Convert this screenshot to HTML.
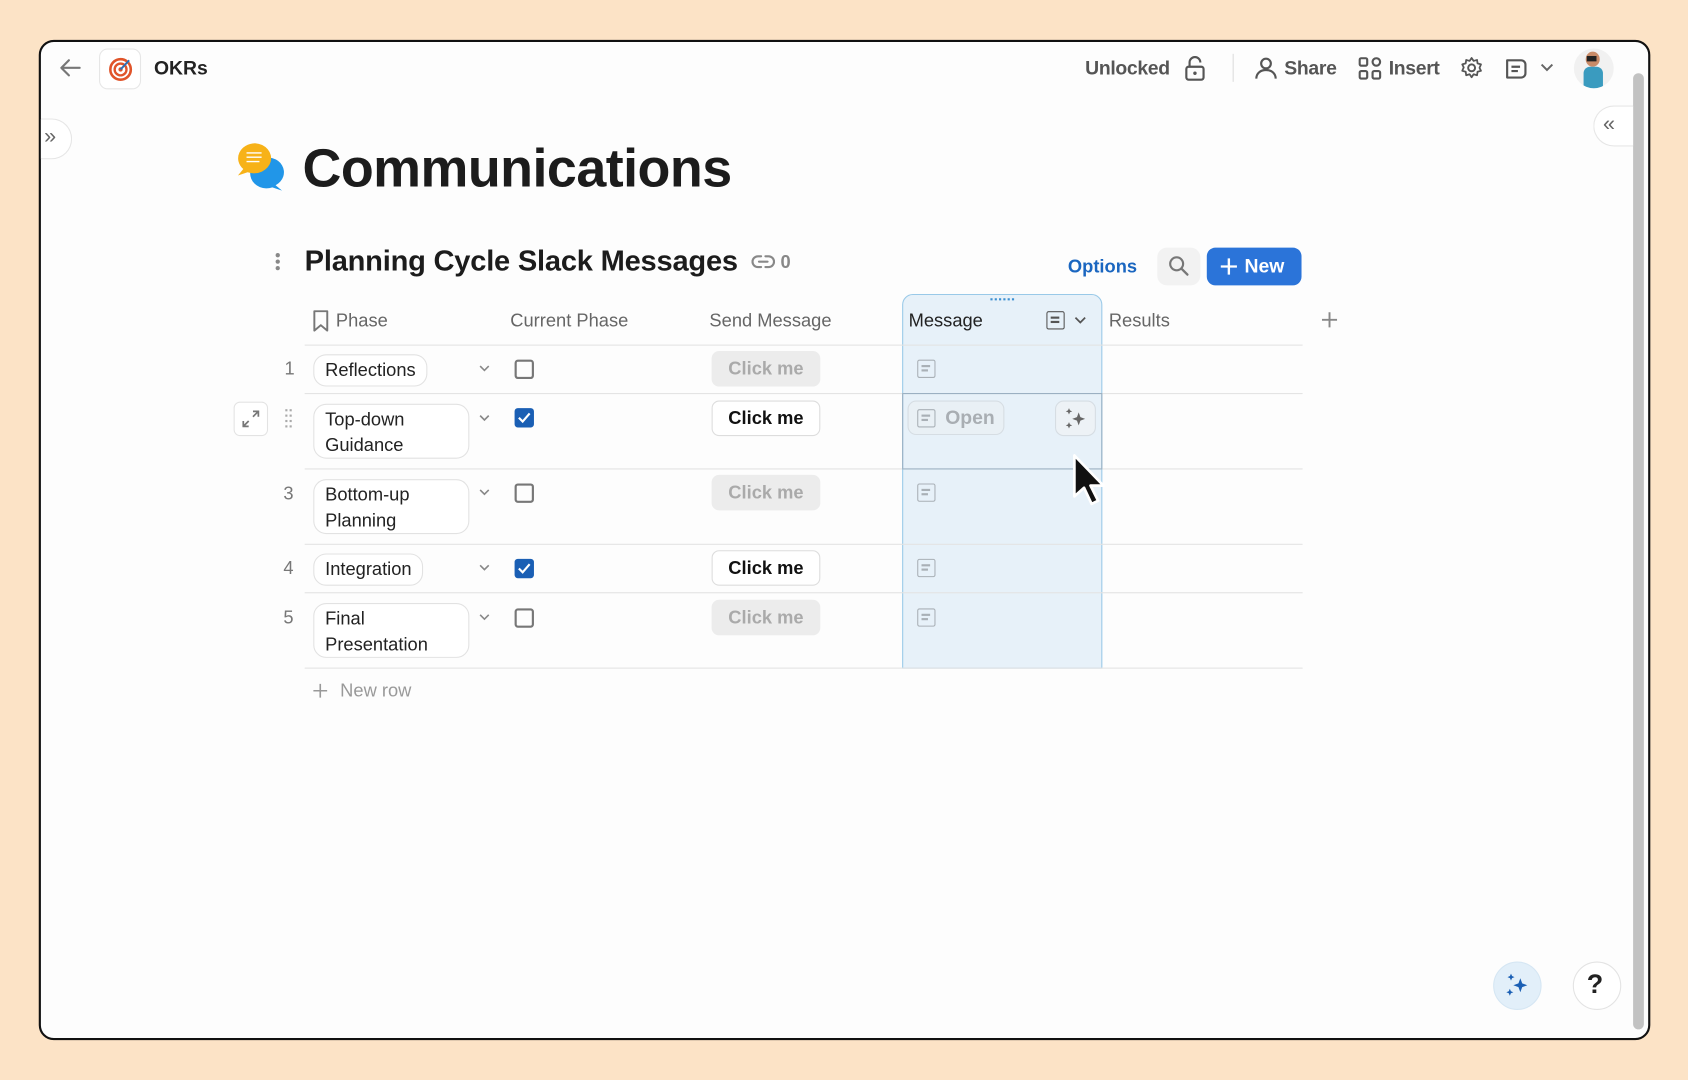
<!DOCTYPE html>
<html><head><meta charset="utf-8">
<style>
*{box-sizing:border-box;margin:0;padding:0}
html,body{width:1688px;height:1080px;overflow:hidden;background:#fce3c6;font-family:"Liberation Sans",sans-serif;color:#222}
#w{position:absolute;left:0;top:0;width:1568px;height:1003px;transform:scale(1.07653,1.07677);transform-origin:0 0}
.a{position:absolute}
#frame{left:36px;top:37px;width:1497px;height:929px;background:#fdfdfd;border:2.5px solid #111;border-radius:14px;overflow:hidden}
.t{position:absolute;white-space:nowrap}
.hd{font-size:17px;color:#666;top:288px}
.pill{position:absolute;border:1px solid #e2e2e2;border-radius:12px;background:#fff;font-size:17px;color:#222;padding:2px 10px;line-height:24px}
.num{position:absolute;font-size:17px;color:#777;width:20px;text-align:center}
.cb{position:absolute;width:18px;height:18px;border:2px solid #777;border-radius:3px;left:478px}
.cbon{background:#1a5fb4;border-color:#1a5fb4}
.btn{position:absolute;left:661px;width:101px;height:33px;border-radius:7px;font-size:17px;text-align:center;line-height:33px;font-weight:bold}
.bg{background:#ececec;color:#aaa}
.bw{background:#fff;border:1px solid #ddd;color:#111;line-height:31px}
.hl{position:absolute;left:283px;width:927px;height:1px;background:#e3e3e3}
.chev{position:absolute;left:445px;width:10px;height:7px}
.mi{position:absolute;left:852px;width:17px;height:17px;border:1.6px solid #a9b0b6;border-radius:2px}
.mi:before,.mi:after{content:"";position:absolute;left:3px;height:1.5px;background:#a9b0b6}
.mi:before{top:4px;width:8px}.mi:after{top:8px;width:6px}
</style></head><body><div id="w">
<div id="frame" class="a"></div>
<div class="a" style="left:1517px;top:68px;width:10px;height:888px;background:#c2c2c2;border-radius:5px"></div>

<svg class="a" style="left:54px;top:53px" width="22" height="20" viewBox="0 0 22 20"><path d="M20 10H3M10 3L3 10l7 7" fill="none" stroke="#777" stroke-width="2" stroke-linecap="round" stroke-linejoin="round"/></svg>
<div class="a" style="left:92px;top:45px;width:39px;height:38px;border:1px solid #e6e6e6;border-radius:8px;background:#fff"></div>
<svg class="a" style="left:100px;top:52px" width="24" height="24" viewBox="0 0 24 24"><circle cx="12" cy="12.5" r="9.5" fill="none" stroke="#e0542a" stroke-width="2.4"/><circle cx="12" cy="12.5" r="5.5" fill="none" stroke="#e0542a" stroke-width="2.2"/><circle cx="12" cy="12.5" r="2" fill="#e0542a"/><path d="M12 12.5L20 4" stroke="#2c6fb8" stroke-width="1.8"/></svg>
<div class="t" style="left:143px;top:53px;font-size:18px;font-weight:bold;color:#222">OKRs</div>

<div class="t" style="left:1008px;top:53px;font-size:18px;font-weight:bold;color:#555;letter-spacing:-0.3px">Unlocked</div>
<svg class="a" style="left:1100px;top:52px" width="20" height="24" viewBox="0 0 20 24"><rect x="2" y="10" width="16" height="12" rx="2" fill="none" stroke="#555" stroke-width="2"/><path d="M5 10V6a5 5 0 0 1 10 0" fill="none" stroke="#555" stroke-width="2"/><circle cx="10" cy="16" r="1.6" fill="#555"/></svg>
<div class="a" style="left:1145px;top:50px;width:1px;height:26px;background:#ddd"></div>
<svg class="a" style="left:1165px;top:52px" width="22" height="22" viewBox="0 0 22 22"><circle cx="11" cy="7" r="4.5" fill="none" stroke="#555" stroke-width="2"/><path d="M2 21c0-5 4-8 9-8s9 3 9 8" fill="none" stroke="#555" stroke-width="2"/></svg>
<div class="t" style="left:1193px;top:53px;font-size:18px;font-weight:bold;color:#555;letter-spacing:-0.3px">Share</div>
<svg class="a" style="left:1262px;top:53px" width="22" height="22" viewBox="0 0 22 22"><rect x="1" y="1" width="7" height="7" rx="1.5" fill="none" stroke="#555" stroke-width="2"/><rect x="1" y="13" width="7" height="7" rx="1.5" fill="none" stroke="#555" stroke-width="2"/><rect x="13" y="13" width="7" height="7" rx="1.5" fill="none" stroke="#555" stroke-width="2"/><circle cx="16.5" cy="4.5" r="3.5" fill="none" stroke="#555" stroke-width="2"/></svg>
<div class="t" style="left:1290px;top:53px;font-size:18px;font-weight:bold;color:#555;letter-spacing:-0.3px">Insert</div>
<svg class="a" style="left:1356px;top:52px" width="22" height="22" viewBox="0 0 24 24"><circle cx="12" cy="12" r="3.5" fill="none" stroke="#555" stroke-width="2"/><path d="M12 2l2 3 3.5-1 .5 3.5 3.5 1-1.5 3.5 1.5 3-3.5 1-.5 3.5-3.5-1-2 3-2-3-3.5 1-.5-3.5-3.5-1 1.5-3.5L2.5 8.5 6 7.5 6.5 4 10 5z" fill="none" stroke="#555" stroke-width="1.8" stroke-linejoin="round"/></svg>
<svg class="a" style="left:1396px;top:52px" width="24" height="24" viewBox="0 0 24 24"><path d="M4 4h13a4 4 0 0 1 4 4v8a4 4 0 0 1-4 4H4z" fill="none" stroke="#555" stroke-width="2" stroke-linejoin="round"/><path d="M8 10h8M8 14h6" stroke="#555" stroke-width="2"/></svg>
<svg class="a" style="left:1431px;top:59px" width="12" height="8" viewBox="0 0 12 8"><path d="M1 1l5 5 5-5" fill="none" stroke="#666" stroke-width="1.8"/></svg>
<div class="a" style="left:1462px;top:45px;width:37px;height:37px;border-radius:50%;background:#f1f1f1;overflow:hidden">
<div class="a" style="left:11px;top:3px;width:13px;height:14px;border-radius:50%;background:#c98b68"></div>
<div class="a" style="left:12px;top:7px;width:9px;height:5px;background:#222"></div>
<div class="a" style="left:9px;top:17px;width:18px;height:22px;border-radius:6px 6px 0 0;background:#3a9bbf"></div></div>

<div class="a" style="left:38px;top:110px;width:29px;height:38px;border:1px solid #e6e6e6;border-left:none;border-radius:0 19px 19px 0;background:#fff"></div>
<div class="t" style="left:41px;top:116px;font-size:20px;color:#666">»</div>
<div class="a" style="left:1480px;top:98px;width:37px;height:38px;border:1px solid #e6e6e6;border-right:none;border-radius:19px 0 0 19px;background:#fff"></div>
<div class="t" style="left:1489px;top:104px;font-size:20px;color:#666">«</div>

<svg class="a" style="left:220px;top:132px" width="46" height="46" viewBox="0 0 46 46"><path d="M22 16a13 12 0 1 1 14 24l6 5-9-3a13 12 0 0 1-11-26z" fill="#2196e8"/><path d="M17 1a16 14 0 1 1-7 27l-9 3 5-6A16 14 0 0 1 17 1z" fill="#f7b218"/><path d="M9 10h14M9 14h14M9 18h12" stroke="#fff" stroke-width="1.3"/></svg>
<div class="t" style="left:281px;top:127px;font-size:50px;font-weight:bold;color:#1c1c1c;letter-spacing:-0.5px">Communications</div>

<div class="a" style="left:256px;top:235px;width:4px;height:4px;border-radius:50%;background:#888;box-shadow:0 6px 0 #888,0 12px 0 #888"></div>
<div class="t" style="left:283px;top:227px;font-size:27px;font-weight:bold;color:#1c1c1c;letter-spacing:-0.2px">Planning Cycle Slack Messages</div>
<svg class="a" style="left:698px;top:235px" width="22" height="16" viewBox="0 0 22 16"><path d="M9 3H6a5 5 0 0 0 0 10h3M13 3h3a5 5 0 0 1 0 10h-3M7 8h8" fill="none" stroke="#888" stroke-width="2" stroke-linecap="round"/></svg>
<div class="t" style="left:725px;top:234px;font-size:17px;color:#888;font-weight:bold">0</div>

<div class="t" style="left:992px;top:238px;font-size:17px;font-weight:bold;color:#1a66c0">Options</div>
<div class="a" style="left:1075px;top:230px;width:40px;height:35px;border-radius:9px;background:#f2f2f2"></div>
<svg class="a" style="left:1085px;top:237px" width="20" height="20" viewBox="0 0 20 20"><circle cx="8" cy="8" r="6" fill="none" stroke="#777" stroke-width="2"/><path d="M12.5 12.5L18 18" stroke="#777" stroke-width="2.2" stroke-linecap="round"/></svg>
<div class="a" style="left:1121px;top:230px;width:88px;height:35px;border-radius:8px;background:#2b74d9"></div>
<svg class="a" style="left:1133px;top:239px" width="17" height="17" viewBox="0 0 17 17"><path d="M8.5 1v15M1 8.5h15" stroke="#fff" stroke-width="2.2"/></svg>
<div class="t" style="left:1156px;top:237px;font-size:18px;color:#fff;font-weight:bold">New</div>

<div class="a" style="left:838px;top:273px;width:186px;height:348px;background:#e7f1f9;border:1px solid #99c9e8;border-radius:10px 10px 0 0"></div>
<div class="a" style="left:920px;top:277px;width:22px;height:2px;border-top:2px dotted #3d8fd0"></div>

<svg class="a" style="left:290px;top:288px" width="16" height="20" viewBox="0 0 16 20"><path d="M2 1h12v18l-6-5-6 5z" fill="none" stroke="#777" stroke-width="1.8" stroke-linejoin="round"/></svg>
<div class="t hd" style="left:312px">Phase</div>
<div class="t hd" style="left:474px">Current Phase</div>
<div class="t hd" style="left:659px">Send Message</div>
<div class="t hd" style="left:844px;color:#222">Message</div>
<div class="a" style="left:972px;top:289px;width:17px;height:17px;border:1.8px solid #555;border-radius:2px"></div>
<div class="a" style="left:976px;top:294px;width:8px;height:1.6px;background:#555;box-shadow:0 4px 0 #555"></div>
<svg class="a" style="left:998px;top:294px" width="11" height="7" viewBox="0 0 11 7"><path d="M1 1l4.5 4.5L10 1" fill="none" stroke="#555" stroke-width="1.6"/></svg>
<div class="t hd" style="left:1030px">Results</div>
<svg class="a" style="left:1227px;top:289px" width="16" height="16" viewBox="0 0 16 16"><path d="M8 1v14M1 8h14" stroke="#888" stroke-width="1.8"/></svg>

<div class="hl" style="top:320px"></div>
<div class="hl" style="top:365px"></div>
<div class="hl" style="top:435px"></div>
<div class="hl" style="top:505px"></div>
<div class="hl" style="top:550px"></div>
<div class="hl" style="top:620px"></div>
<div class="a" style="left:838px;top:365px;width:186px;height:71px;border:1px solid #9ab0c2"></div>

<svg width="0" height="0" style="position:absolute"><defs><symbol id="cv" viewBox="0 0 10 7"><path d="M1 1l4 4 4-4" fill="none" stroke="#888" stroke-width="1.5"/></symbol></defs></svg>

<div class="num" style="left:259px;top:333px">1</div>
<div class="pill" style="left:291px;top:329px">Reflections</div>
<svg class="chev" style="top:339px"><use href="#cv"/></svg>
<div class="cb" style="top:334px"></div>
<div class="btn bg" style="top:326px">Click me</div>
<div class="mi" style="top:334px"></div>

<div class="a" style="left:217px;top:373px;width:32px;height:32px;border:1px solid #e3e3e3;border-radius:6px;background:#fff"></div>
<svg class="a" style="left:224px;top:380px" width="18" height="18" viewBox="0 0 18 18"><path d="M11 2h5v5M16 2l-5 5M7 16H2v-5M2 16l5-5" fill="none" stroke="#777" stroke-width="1.6"/></svg>
<div class="a" style="left:265px;top:380px;width:2px;height:2px;background:#aaa;box-shadow:4px 0 #aaa,0 5px #aaa,4px 5px #aaa,0 10px #aaa,4px 10px #aaa,0 15px #aaa,4px 15px #aaa"></div>
<div class="pill" style="left:291px;top:375px;width:145px;height:51px">Top-down<br>Guidance</div>
<svg class="chev" style="top:385px"><use href="#cv"/></svg>
<div class="cb cbon" style="top:379px"></div>
<svg class="a" style="left:480px;top:381px" width="14" height="14" viewBox="0 0 14 14"><path d="M2 7l3.5 3.5L12 3" fill="none" stroke="#fff" stroke-width="2"/></svg>
<div class="btn bw" style="top:372px">Click me</div>
<div class="a" style="left:843px;top:372px;width:90px;height:32px;border:1px solid #d6dde3;border-radius:8px;background:#e9f0f5"></div>
<div class="mi" style="top:380px"></div>
<div class="t" style="left:878px;top:378px;font-size:18px;font-weight:bold;color:#a9aeb3">Open</div>
<div class="a" style="left:980px;top:372px;width:38px;height:33px;border:1px solid #d6dde3;border-radius:8px;background:#edf2f6"></div>
<svg class="a" style="left:987px;top:377px" width="24" height="24" viewBox="0 0 24 24"><path d="M15 6l1.6 4.4L21 12l-4.4 1.6L15 18l-1.6-4.4L9 12l4.4-1.6z" fill="#666"/><path d="M6 2l.9 2.1L9 5l-2.1.9L6 8l-.9-2.1L3 5l2.1-.9zM6 15l.9 2.1L9 18l-2.1.9L6 21l-.9-2.1L3 18l2.1-.9z" fill="#666"/></svg>

<div class="num" style="left:258px;top:449px">3</div>
<div class="pill" style="left:291px;top:445px;width:145px;height:51px">Bottom-up<br>Planning</div>
<svg class="chev" style="top:454px"><use href="#cv"/></svg>
<div class="cb" style="top:449px"></div>
<div class="btn bg" style="top:441px">Click me</div>
<div class="mi" style="top:449px"></div>

<div class="num" style="left:258px;top:518px">4</div>
<div class="pill" style="left:291px;top:514px">Integration</div>
<svg class="chev" style="top:524px"><use href="#cv"/></svg>
<div class="cb cbon" style="top:519px"></div>
<svg class="a" style="left:480px;top:521px" width="14" height="14" viewBox="0 0 14 14"><path d="M2 7l3.5 3.5L12 3" fill="none" stroke="#fff" stroke-width="2"/></svg>
<div class="btn bw" style="top:511px">Click me</div>
<div class="mi" style="top:519px"></div>

<div class="num" style="left:258px;top:564px">5</div>
<div class="pill" style="left:291px;top:560px;width:145px;height:51px">Final<br>Presentation</div>
<svg class="chev" style="top:570px"><use href="#cv"/></svg>
<div class="cb" style="top:565px"></div>
<div class="btn bg" style="top:557px">Click me</div>
<div class="mi" style="top:565px"></div>

<svg class="a" style="left:291px;top:635px" width="13" height="13" viewBox="0 0 13 13"><path d="M6.5 0v13M0 6.5h13" stroke="#999" stroke-width="1.5"/></svg>
<div class="t" style="left:316px;top:632px;font-size:17px;color:#999">New row</div>

<svg class="a" style="left:996px;top:421px" width="34" height="52" viewBox="0 0 34 52"><path d="M2 2v38l9-8 7 15 6-3-7-14h12z" fill="#111" stroke="#fff" stroke-width="2.5" stroke-linejoin="round"/></svg>

<div class="a" style="left:1387px;top:893px;width:45px;height:45px;border-radius:50%;background:#e2eff9;border:1px solid #d5e6f3"></div>
<svg class="a" style="left:1396px;top:902px" width="26" height="26" viewBox="0 0 24 24"><path d="M15 6l1.6 4.4L21 12l-4.4 1.6L15 18l-1.6-4.4L9 12l4.4-1.6z" fill="#1a5fb4"/><path d="M7 2l.9 2.1L10 5l-2.1.9L7 8l-.9-2.1L4 5l2.1-.9zM6 15l.9 2.1L9 18l-2.1.9L6 21l-.9-2.1L3 18l2.1-.9z" fill="#1a5fb4"/></svg>
<div class="a" style="left:1461px;top:893px;width:45px;height:45px;border-radius:50%;background:#fff;border:1px solid #e3e3e3"></div>
<div class="t" style="left:1474px;top:900px;font-size:25px;font-weight:bold;color:#222">?</div>
</div></body></html>
